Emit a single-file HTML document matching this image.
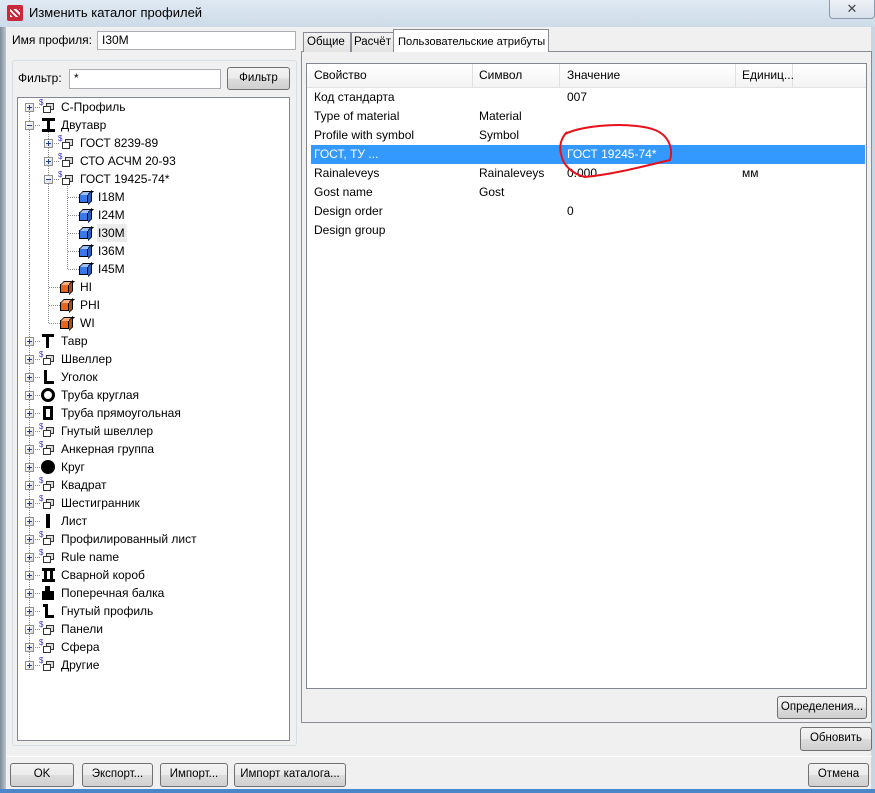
<!DOCTYPE html>
<html><head><meta charset="utf-8"><style>
*{margin:0;padding:0;box-sizing:border-box}
body{width:875px;height:793px;overflow:hidden;background:#f0f0f0;font-family:"Liberation Sans","DejaVu Sans",sans-serif;font-size:12px;color:#000;position:relative}
.a{position:absolute}
.title{left:0;top:0;width:875px;height:27px;background:linear-gradient(#dfe9f3,#cddbe8);}
.frameL{left:0;top:27px;width:6px;height:766px;background:linear-gradient(90deg,#7e8a96,#b9c6d3)}
.frameR{right:0;top:27px;width:4px;height:766px;background:#c8d6e4}
.frameB{left:0;bottom:0;width:875px;height:4px;background:#4a86c8}
.inp{background:#fff;border:1px solid #abadb3;padding-left:4px;line-height:17px}
.btn{border:1px solid #707070;border-radius:3px;background:linear-gradient(#f2f2f2 0%,#ebebeb 50%,#dddddd 51%,#cfcfcf 100%);text-align:center;line-height:21px;white-space:nowrap;font-size:11.5px}
.r{position:absolute;height:18px;line-height:18px;white-space:nowrap}
.e{position:absolute;width:9px;height:9px;border:1px solid #919191;background:linear-gradient(135deg,#fff,#dcdcdc)}
.e::before{content:"";position:absolute;left:1px;top:3px;width:5px;height:1px;background:#1c3f94}
.p::after{content:"";position:absolute;left:3px;top:1px;width:1px;height:5px;background:#1c3f94}
.hd{position:absolute;height:1px;border-top:1px dotted #8a8a8a}
.vd{position:absolute;width:1px;border-left:1px dotted #8a8a8a}
.s{position:absolute;font-size:8px;color:#3a3ad0;line-height:8px}
.w{position:absolute;width:8px;height:7px;border:1px solid #333;background:#ddd}
.w2{position:absolute;width:8px;height:7px;border:1px solid #333;background:#fff}
.cube{position:absolute;width:9px;height:9px;border:1px solid #000}
.bl{background:#3b78e7}.or{background:#e8641a}
.cube::before{content:"";position:absolute;left:1px;top:-4px;width:9px;height:3px;border:1px solid #000;border-bottom:none;transform:skewX(-45deg)}
.bl::before{background:#9ec0f7}.or::before{background:#f7b07f}
.cube::after{content:"";position:absolute;left:8px;top:-3px;width:3px;height:9px;border:1px solid #000;border-left:none;transform:skewY(-45deg)}
.bl::after{background:#2a5fc0}.or::after{background:#b84a10}
.tab{position:absolute;top:32px;height:20px;border:1px solid #898c95;border-bottom:none;background:linear-gradient(#f2f2f2,#e3e3e3);padding:0 3px;line-height:19px;white-space:nowrap;font-size:11.5px}
.cell{position:absolute;line-height:19px;white-space:nowrap}
</style></head><body>
<div class="a title"></div>
<div class="a" style="left:7px;top:5px;width:16px;height:16px;background:#c8283a;border-radius:2px"></div>
<div class="a" style="left:10px;top:9px;width:10px;height:8px;background:repeating-linear-gradient(45deg,#fff 0 2px,#c8283a 2px 4px)"></div>
<div class="a" style="left:29px;top:5px;font-size:13px">Изменить каталог профилей</div>
<div class="a" style="left:829px;top:0;width:46px;height:19px;border:1px solid #8a99ab;border-top:none;border-radius:0 0 4px 4px;background:linear-gradient(#eef2f7,#d7e0ea);text-align:center;color:#444;font-size:13px;line-height:17px">✕</div>
<div class="a frameL"></div><div class="a frameR"></div><div class="a frameB"></div>

<div class="a" style="left:12px;top:33px">Имя профиля:</div>
<div class="a inp" style="left:97px;top:31px;width:199px;height:19px">I30M</div>

<div class="a" style="left:12px;top:60px;width:285px;height:686px;border:1px solid #d5dfe5;border-radius:3px"></div>
<div class="a" style="left:18px;top:71px">Фильтр:</div>
<div class="a inp" style="left:69px;top:69px;width:152px;height:20px">*</div>
<div class="a btn" style="left:227px;top:67px;width:63px;height:23px">Фильтр</div>
<div class="a" style="left:17px;top:97px;width:273px;height:644px;background:#fff;border:1px solid #828790"></div>

<div class="vd" style="left:29px;top:112px;height:553px"></div>
<div class="vd" style="left:48px;top:130px;height:193px"></div>
<div class="vd" style="left:67px;top:184px;height:85px"></div>

<div id="tree">
<div class="e p" style="left:25px;top:103px"></div><div class="hd" style="left:35px;top:107px;width:5px"></div><span class="s" style="left:39px;top:99px">$</span><div class="w" style="left:46px;top:103px"></div><div class="w2" style="left:43px;top:106px"></div><div class="r" style="left:61px;top:98px">С-Профиль</div>
<div class="e" style="left:25px;top:121px"></div><div class="hd" style="left:35px;top:125px;width:5px"></div><div class="a" style="left:42px;top:118px;width:13px;height:14px;border-top:3px solid #000;border-bottom:3px solid #000"></div><div class="a" style="left:47px;top:118px;width:3px;height:14px;background:#000"></div><div class="r" style="left:61px;top:116px">Двутавр</div>

<div class="e p" style="left:44px;top:139px"></div><div class="hd" style="left:54px;top:143px;width:5px"></div><span class="s" style="left:58px;top:135px">$</span><div class="w" style="left:65px;top:139px"></div><div class="w2" style="left:62px;top:142px"></div><div class="r" style="left:80px;top:134px">ГОСТ 8239-89</div>
<div class="e p" style="left:44px;top:157px"></div><div class="hd" style="left:54px;top:161px;width:5px"></div><span class="s" style="left:58px;top:153px">$</span><div class="w" style="left:65px;top:157px"></div><div class="w2" style="left:62px;top:160px"></div><div class="r" style="left:80px;top:152px">СТО АСЧМ 20-93</div>
<div class="e" style="left:44px;top:175px"></div><div class="hd" style="left:54px;top:179px;width:5px"></div><span class="s" style="left:58px;top:171px">$</span><div class="w" style="left:65px;top:175px"></div><div class="w2" style="left:62px;top:178px"></div><div class="r" style="left:80px;top:170px">ГОСТ 19425-74*</div>

<div class="hd" style="left:68px;top:197px;width:11px"></div><div class="cube bl" style="left:79px;top:194px"></div><div class="r" style="left:98px;top:188px">I18M</div>
<div class="hd" style="left:68px;top:215px;width:11px"></div><div class="cube bl" style="left:79px;top:212px"></div><div class="r" style="left:98px;top:206px">I24M</div>
<div class="hd" style="left:68px;top:233px;width:11px"></div><div class="cube bl" style="left:79px;top:230px"></div><div class="r" style="left:97px;top:224px;background:#ececec;padding:0 1px;width:30px">I30M</div>
<div class="hd" style="left:68px;top:251px;width:11px"></div><div class="cube bl" style="left:79px;top:248px"></div><div class="r" style="left:98px;top:242px">I36M</div>
<div class="hd" style="left:68px;top:269px;width:11px"></div><div class="cube bl" style="left:79px;top:266px"></div><div class="r" style="left:98px;top:260px">I45M</div>

<div class="hd" style="left:49px;top:287px;width:11px"></div><div class="cube or" style="left:60px;top:284px"></div><div class="r" style="left:80px;top:278px">HI</div>
<div class="hd" style="left:49px;top:305px;width:11px"></div><div class="cube or" style="left:60px;top:302px"></div><div class="r" style="left:80px;top:296px">PHI</div>
<div class="hd" style="left:49px;top:323px;width:11px"></div><div class="cube or" style="left:60px;top:320px"></div><div class="r" style="left:80px;top:314px">WI</div>

<div class="e p" style="left:25px;top:337px"></div><div class="hd" style="left:35px;top:341px;width:5px"></div><div class="a" style="left:42px;top:334px;width:12px;height:3px;background:#000"></div><div class="a" style="left:46px;top:334px;width:3px;height:14px;background:#000"></div><div class="r" style="left:61px;top:332px">Тавр</div>
<div class="e p" style="left:25px;top:355px"></div><div class="hd" style="left:35px;top:359px;width:5px"></div><span class="s" style="left:39px;top:351px">$</span><div class="w" style="left:46px;top:355px"></div><div class="w2" style="left:43px;top:358px"></div><div class="r" style="left:61px;top:350px">Швеллер</div>
<div class="e p" style="left:25px;top:373px"></div><div class="hd" style="left:35px;top:377px;width:5px"></div><div class="a" style="left:44px;top:370px;width:10px;height:14px;border-left:3px solid #000;border-bottom:3px solid #000"></div><div class="r" style="left:61px;top:368px">Уголок</div>
<div class="e p" style="left:25px;top:391px"></div><div class="hd" style="left:35px;top:395px;width:5px"></div><div class="a" style="left:41px;top:388px;width:14px;height:14px;border:3px solid #000;border-radius:50%"></div><div class="r" style="left:61px;top:386px">Труба круглая</div>
<div class="e p" style="left:25px;top:409px"></div><div class="hd" style="left:35px;top:413px;width:5px"></div><div class="a" style="left:43px;top:406px;width:10px;height:14px;border:3px solid #000"></div><div class="r" style="left:61px;top:404px">Труба прямоугольная</div>
<div class="e p" style="left:25px;top:427px"></div><div class="hd" style="left:35px;top:431px;width:5px"></div><span class="s" style="left:39px;top:423px">$</span><div class="w" style="left:46px;top:427px"></div><div class="w2" style="left:43px;top:430px"></div><div class="r" style="left:61px;top:422px">Гнутый швеллер</div>
<div class="e p" style="left:25px;top:445px"></div><div class="hd" style="left:35px;top:449px;width:5px"></div><span class="s" style="left:39px;top:441px">$</span><div class="w" style="left:46px;top:445px"></div><div class="w2" style="left:43px;top:448px"></div><div class="r" style="left:61px;top:440px">Анкерная группа</div>
<div class="e p" style="left:25px;top:463px"></div><div class="hd" style="left:35px;top:467px;width:5px"></div><div class="a" style="left:41px;top:460px;width:14px;height:14px;background:#000;border-radius:50%"></div><div class="r" style="left:61px;top:458px">Круг</div>
<div class="e p" style="left:25px;top:481px"></div><div class="hd" style="left:35px;top:485px;width:5px"></div><span class="s" style="left:39px;top:477px">$</span><div class="w" style="left:46px;top:481px"></div><div class="w2" style="left:43px;top:484px"></div><div class="r" style="left:61px;top:476px">Квадрат</div>
<div class="e p" style="left:25px;top:499px"></div><div class="hd" style="left:35px;top:503px;width:5px"></div><span class="s" style="left:39px;top:495px">$</span><div class="w" style="left:46px;top:499px"></div><div class="w2" style="left:43px;top:502px"></div><div class="r" style="left:61px;top:494px">Шестигранник</div>
<div class="e p" style="left:25px;top:517px"></div><div class="hd" style="left:35px;top:521px;width:5px"></div><div class="a" style="left:46px;top:514px;width:4px;height:14px;background:#000"></div><div class="r" style="left:61px;top:512px">Лист</div>
<div class="e p" style="left:25px;top:535px"></div><div class="hd" style="left:35px;top:539px;width:5px"></div><span class="s" style="left:39px;top:531px">$</span><div class="w" style="left:46px;top:535px"></div><div class="w2" style="left:43px;top:538px"></div><div class="r" style="left:61px;top:530px">Профилированный лист</div>
<div class="e p" style="left:25px;top:553px"></div><div class="hd" style="left:35px;top:557px;width:5px"></div><span class="s" style="left:39px;top:549px">$</span><div class="w" style="left:46px;top:553px"></div><div class="w2" style="left:43px;top:556px"></div><div class="r" style="left:61px;top:548px">Rule name</div>
<div class="e p" style="left:25px;top:571px"></div><div class="hd" style="left:35px;top:575px;width:5px"></div><div class="a" style="left:42px;top:568px;width:13px;height:14px;border-top:3px solid #000;border-bottom:3px solid #000"></div><div class="a" style="left:44px;top:568px;width:3px;height:14px;background:#000"></div><div class="a" style="left:50px;top:568px;width:3px;height:14px;background:#000"></div><div class="r" style="left:61px;top:566px">Сварной короб</div>
<div class="e p" style="left:25px;top:589px"></div><div class="hd" style="left:35px;top:593px;width:5px"></div><div class="a" style="left:45px;top:586px;width:5px;height:6px;background:#000"></div><div class="a" style="left:42px;top:591px;width:12px;height:9px;background:#000"></div><div class="r" style="left:61px;top:584px">Поперечная балка</div>
<div class="e p" style="left:25px;top:607px"></div><div class="hd" style="left:35px;top:611px;width:5px"></div><div class="a" style="left:43px;top:604px;width:5px;height:11px;border-top:3px solid #000;border-right:3px solid #000"></div><div class="a" style="left:45px;top:615px;width:9px;height:3px;background:#000"></div><div class="r" style="left:61px;top:602px">Гнутый профиль</div>
<div class="e p" style="left:25px;top:625px"></div><div class="hd" style="left:35px;top:629px;width:5px"></div><span class="s" style="left:39px;top:621px">$</span><div class="w" style="left:46px;top:625px"></div><div class="w2" style="left:43px;top:628px"></div><div class="r" style="left:61px;top:620px">Панели</div>
<div class="e p" style="left:25px;top:643px"></div><div class="hd" style="left:35px;top:647px;width:5px"></div><span class="s" style="left:39px;top:639px">$</span><div class="w" style="left:46px;top:643px"></div><div class="w2" style="left:43px;top:646px"></div><div class="r" style="left:61px;top:638px">Сфера</div>
<div class="e p" style="left:25px;top:661px"></div><div class="hd" style="left:35px;top:665px;width:5px"></div><span class="s" style="left:39px;top:657px">$</span><div class="w" style="left:46px;top:661px"></div><div class="w2" style="left:43px;top:664px"></div><div class="r" style="left:61px;top:656px">Другие</div>
</div>

<div class="a" style="left:301px;top:51px;width:571px;height:672px;border:1px solid #898c95;background:#f0f0f0"></div>
<div class="tab" style="left:303px;width:48px">Общие</div>
<div class="tab" style="left:351px;width:43px;padding:0 2px">Расчёт</div>
<div class="tab" style="left:393px;top:29px;height:23px;width:156px;background:#fff;line-height:24px;z-index:2;padding:0 4px;font-size:11.2px">Пользовательские атрибуты</div>
<div class="a" style="left:306px;top:63px;width:561px;height:626px;background:#fff;border:1px solid #828790"></div>
<div class="a" style="left:307px;top:64px;width:559px;height:24px;background:linear-gradient(#fff,#f3f3f3);border-bottom:1px solid #e2e2e2"></div>
<div class="a" style="left:472px;top:64px;width:1px;height:24px;background:#e0e0e0"></div>
<div class="a" style="left:559px;top:64px;width:1px;height:24px;background:#e0e0e0"></div>
<div class="a" style="left:735px;top:64px;width:1px;height:24px;background:#e0e0e0"></div>
<div class="a" style="left:792px;top:64px;width:1px;height:24px;background:#e0e0e0"></div>
<div class="cell" style="left:314px;top:66px">Свойство</div>
<div class="cell" style="left:479px;top:66px">Символ</div>
<div class="cell" style="left:567px;top:66px">Значение</div>
<div class="cell" style="left:742px;top:66px">Единиц...</div>

<div class="a" style="left:311px;top:145px;width:554px;height:19px;background:#3399ff"></div>
<div class="cell" style="left:314px;top:88px">Код стандарта</div><div class="cell" style="left:567px;top:88px">007</div>
<div class="cell" style="left:314px;top:107px">Type of material</div><div class="cell" style="left:479px;top:107px">Material</div>
<div class="cell" style="left:314px;top:126px">Profile with symbol</div><div class="cell" style="left:479px;top:126px">Symbol</div>
<div class="cell" style="left:314px;top:145px;color:#fff">ГОСТ, ТУ ...</div><div class="cell" style="left:567px;top:145px;color:#fff">ГОСТ 19245-74*</div>
<div class="cell" style="left:314px;top:164px">Rainaleveys</div><div class="cell" style="left:479px;top:164px">Rainaleveys</div><div class="cell" style="left:567px;top:164px">0.000</div><div class="cell" style="left:742px;top:164px">мм</div>
<div class="cell" style="left:314px;top:183px">Gost name</div><div class="cell" style="left:479px;top:183px">Gost</div>
<div class="cell" style="left:314px;top:202px">Design order</div><div class="cell" style="left:567px;top:202px">0</div>
<div class="cell" style="left:314px;top:221px">Design group</div>

<svg class="a" style="left:555px;top:122px" width="125" height="65"><path d="M10 12 C30 2 80 0 100 8 C115 14 118 28 115 38 C90 44 60 52 30 55 C18 52 8 44 6 32 C4 24 6 16 12 10" fill="none" stroke="#e8101a" stroke-width="2"/></svg>

<div class="a btn" style="left:777px;top:696px;width:90px;height:23px">Определения...</div>
<div class="a btn" style="left:800px;top:727px;width:72px;height:24px">Обновить</div>
<div class="a" style="left:7px;top:756px;width:865px;height:1px;background:#a0a0a0;border-bottom:1px solid #fff"></div>
<div class="a btn" style="left:10px;top:763px;width:64px;height:24px">OK</div>
<div class="a btn" style="left:82px;top:763px;width:71px;height:24px">Экспорт...</div>
<div class="a btn" style="left:160px;top:763px;width:68px;height:24px">Импорт...</div>
<div class="a btn" style="left:234px;top:763px;width:112px;height:24px">Импорт каталога...</div>
<div class="a btn" style="left:808px;top:763px;width:61px;height:24px">Отмена</div>
</body></html>
